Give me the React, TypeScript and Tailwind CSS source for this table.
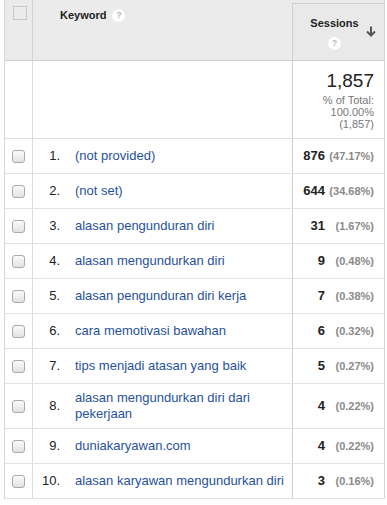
import React from 'react';

type Row = { n: number; keyword: string; sessions: number; pct: string };

const rows: Row[] = [
  { n: 1, keyword: '(not provided)', sessions: 876, pct: '(47.17%)' },
  { n: 2, keyword: '(not set)', sessions: 644, pct: '(34.68%)' },
  { n: 3, keyword: 'alasan pengunduran diri', sessions: 31, pct: '(1.67%)' },
  { n: 4, keyword: 'alasan mengundurkan diri', sessions: 9, pct: '(0.48%)' },
  { n: 5, keyword: 'alasan pengunduran diri kerja', sessions: 7, pct: '(0.38%)' },
  { n: 6, keyword: 'cara memotivasi bawahan', sessions: 6, pct: '(0.32%)' },
  { n: 7, keyword: 'tips menjadi atasan yang baik', sessions: 5, pct: '(0.27%)' },
  { n: 8, keyword: 'alasan mengundurkan diri dari pekerjaan', sessions: 4, pct: '(0.22%)' },
  { n: 9, keyword: 'duniakaryawan.com', sessions: 4, pct: '(0.22%)' },
  { n: 10, keyword: 'alasan karyawan mengundurkan diri', sessions: 3, pct: '(0.16%)' },
];

function HelpIcon() {
  return (
    <span className="inline-flex w-[13px] h-[13px] rounded-full bg-white items-center justify-center text-[9px] leading-none text-[#b5b5b5] font-bold">
      ?
    </span>
  );
}

function Checkbox() {
  return (
    <span className="block w-[13px] h-[13px] rounded-[3px] border border-[#a9a9a9] bg-gradient-to-b from-[#fbfbfb] to-[#e2e2e2]" />
  );
}

export default function App() {
  return (
    <div className="w-[387px] h-[505px] bg-white font-['Liberation_Sans',Arial,sans-serif] text-[#222]">
      <div className="ml-[4px] w-[381px] border-l border-r border-[#d6d6d6]">
        {/* header */}
        <div className="flex h-[61px] bg-[#ebebeb] border-b border-[#d0d0d0]">
          <div className="w-[28px] border-r border-[#d4d4d4] pt-[6px] pl-[8px]">
            <span className="block w-[14px] h-[14px] border border-[#c8c8c8]" />
          </div>
          <div className="flex-1 flex items-start gap-[6px] pl-[27px] pt-[9px]">
            <span className="text-[11px] font-bold leading-[13px] text-[#222]">Keyword</span>
            <HelpIcon />
          </div>
          <div className="w-[92px] mt-[3px] border-l border-t border-[#cfcfcf] bg-[#e9e9e9] flex">
            <div className="flex-1 flex flex-col items-center pt-[13px] pl-[10px] gap-[7px]">
              <span className="text-[11px] font-bold leading-[13px] text-[#222]">Sessions</span>
              <HelpIcon />
            </div>
            <div className="w-[18px] pt-[22px]">
              <svg width="10" height="11" viewBox="0 0 10 11">
                <path d="M5 0.5V9" stroke="#555" strokeWidth="2" />
                <path d="M1 5.5L5 9.5L9 5.5" stroke="#555" strokeWidth="2" fill="none" />
              </svg>
            </div>
          </div>
        </div>

        {/* total row */}
        <div className="flex h-[78px] border-b border-[#dedede]">
          <div className="w-[28px] border-r border-[#dcdcdc]" />
          <div className="flex-1" />
          <div className="w-[92px] border-l border-[#cfcfcf] flex flex-col items-end pr-[10px] pt-[9px] text-right">
            <span className="text-[19px] leading-[22px] text-[#222]">1,857</span>
            <span className="text-[11px] leading-[12px] text-[#777] mt-[2px]">% of Total:</span>
            <span className="text-[11px] leading-[12px] text-[#777]">100.00%</span>
            <span className="text-[11px] leading-[12px] text-[#777]">(1,857)</span>
          </div>
        </div>

        {/* data rows */}
        {rows.map(r => (
          <div key={r.n} className="flex border-b border-[#e2e2e2]">
            <div className="w-[28px] border-r border-[#dcdcdc] flex items-center pl-[7px]">
              <Checkbox />
            </div>
            <div className="flex-1 flex items-center min-h-[34px]">
              <span className="w-[27px] text-right text-[13px] leading-[16px]">{r.n}.</span>
              <span className="flex-1 pl-[15px] pr-[8px] py-[6px] text-[13px] leading-[16px] text-[#1f51a0]">{r.keyword}</span>
            </div>
            <div className="w-[92px] border-l border-[#cfcfcf] flex items-center justify-end pr-[10px]">
              <span className="text-[13px] font-bold leading-[16px] text-[#222]">{r.sessions}</span>
              <span className="w-[49px] text-right text-[11px] font-bold leading-[16px] text-[#8a8a8a]">{r.pct}</span>
            </div>
          </div>
        ))}
      </div>
    </div>
  );
}
